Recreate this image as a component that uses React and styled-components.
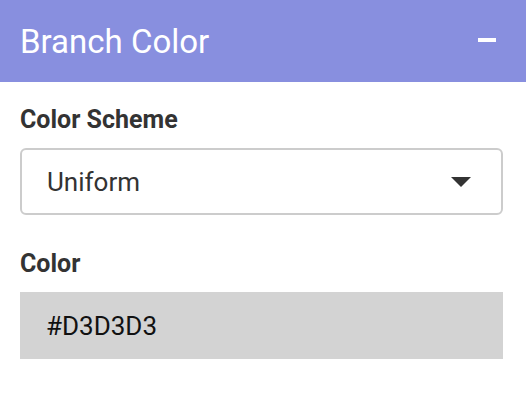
import React from "react";
import styled, { createGlobalStyle } from "styled-components";

const GlobalStyle = createGlobalStyle`
  body {
    margin: 0;
    background: #ffffff;
    font-family: Roboto, "Liberation Sans", sans-serif;
  }
`;

export default function App() {
  return (
    <>
      <GlobalStyle />
      <Panel>
        <Header>
          <Title>Branch Color</Title>
          <CollapseButton aria-label="collapse">
            <svg width="18" height="4" viewBox="0 0 18 4">
              <rect width="18" height="4" fill="#ffffff" />
            </svg>
          </CollapseButton>
        </Header>
        <Body>
          <Label>Color Scheme</Label>
          <Select>
            <span>Uniform</span>
            <Caret />
          </Select>
          <Label top="34px">Color</Label>
          <ColorField color="#D3D3D3">#D3D3D3</ColorField>
        </Body>
      </Panel>
    </>
  );
}

const Panel = styled.div`
  width: 526px;
  height: 410px;
  background: #ffffff;
  overflow: hidden;
  border-radius: 0 0 6px 6px;
`;

const Header = styled.div`
  height: 82px;
  background: #888fdf;
  display: flex;
  align-items: center;
  justify-content: space-between;
  padding: 0 30px 0 20px;
  box-sizing: border-box;
`;

const Title = styled.h2`
  margin: 0;
  font-size: 33px;
  font-weight: 400;
  color: #ffffff;
`;

const CollapseButton = styled.button`
  border: none;
  background: none;
  padding: 0;
  display: flex;
  margin-top: -2px;
  cursor: pointer;
`;

const Body = styled.div`
  padding: 23px 23px 0 20px;
  display: flex;
  flex-direction: column;
`;

const Label = styled.label`
  font-size: 25px;
  line-height: 30px;
  font-weight: 700;
  color: #333333;
  margin-top: ${(p) => p.top || "0"};
  margin-bottom: 13px;
`;

const Select = styled.div`
  height: 67px;
  box-sizing: border-box;
  border: 2px solid #cccccc;
  border-radius: 6px;
  display: flex;
  align-items: center;
  justify-content: space-between;
  padding: 0 30px 0 25px;
  font-size: 26px;
  color: #333333;
`;

const Caret = styled.span`
  width: 0;
  height: 0;
  border-left: 10px solid transparent;
  border-right: 10px solid transparent;
  border-top: 10px solid #333333;
`;

const ColorField = styled.div`
  height: 67px;
  box-sizing: border-box;
  background: ${(p) => p.color};
  display: flex;
  align-items: center;
  padding-left: 26px;
  font-size: 26px;
  color: #111111;
`;
